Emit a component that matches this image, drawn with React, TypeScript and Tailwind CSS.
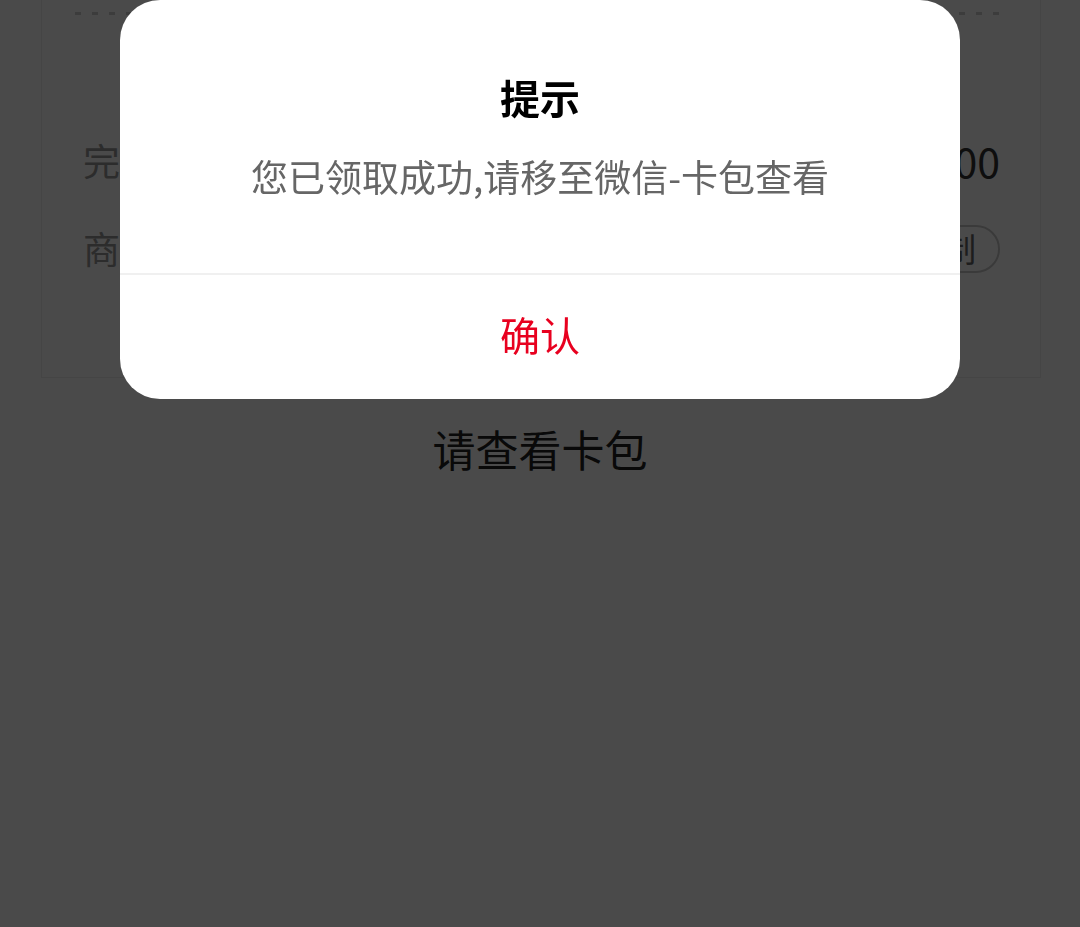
const cjk = { fontFamily: '"Noto Sans CJK SC", "Noto Sans", sans-serif' }

export default function App() {
  return (
    <div className="relative h-[927px] w-[1080px] overflow-hidden bg-white" style={cjk}>
      {/* page underneath */}
      <div className="ml-[41px] w-[1000px] border-x border-b border-[#ececec]">
        <div className="px-[33px] pt-[12px]">
          <div className="h-[3px] bg-[repeating-linear-gradient(to_right,#d0d0d0_0_6px,transparent_6px_17px)]" />
        </div>
        <div className="pl-[41px] pr-[40px] pt-[103px] pb-[83px]">
          <div className="flex h-[86px] items-center justify-between">
            <span className="text-[37px] text-[#999]">完成时间</span>
            <span className="text-[41px] text-[#333]">2023-06-18 10:30:00</span>
          </div>
          <div className="flex h-[90px] items-center justify-between">
            <span className="text-[37px] text-[#999]">商户订单号</span>
            <span className="flex h-[48px] items-center rounded-full border-2 border-[#c8c8c8] px-[22px] text-[33px] text-[#666]">
              复制
            </span>
          </div>
        </div>
      </div>
      <div className="pt-[42px] text-center text-[43px] leading-[56px] text-[#222]">请查看卡包</div>

      {/* dialog */}
      <div className="fixed inset-0 flex items-start justify-center bg-black/[0.71]">
        <div className="w-[840px] overflow-hidden rounded-[40px] bg-white">
          <div className="h-[273px] text-center">
            <div className="pt-[73px] text-[40px] font-semibold leading-[48px] text-black">提示</div>
            <div className="mt-[31px] text-[37px] leading-[48px] text-[#666]">
              您已领取成功,请移至微信-卡包查看
            </div>
          </div>
          <div className="flex h-[126px] items-center justify-center border-t-2 border-[#f0f0f0] pb-[7px] text-[40px] text-[#e8001f]">
            确认
          </div>
        </div>
      </div>
    </div>
  )
}
